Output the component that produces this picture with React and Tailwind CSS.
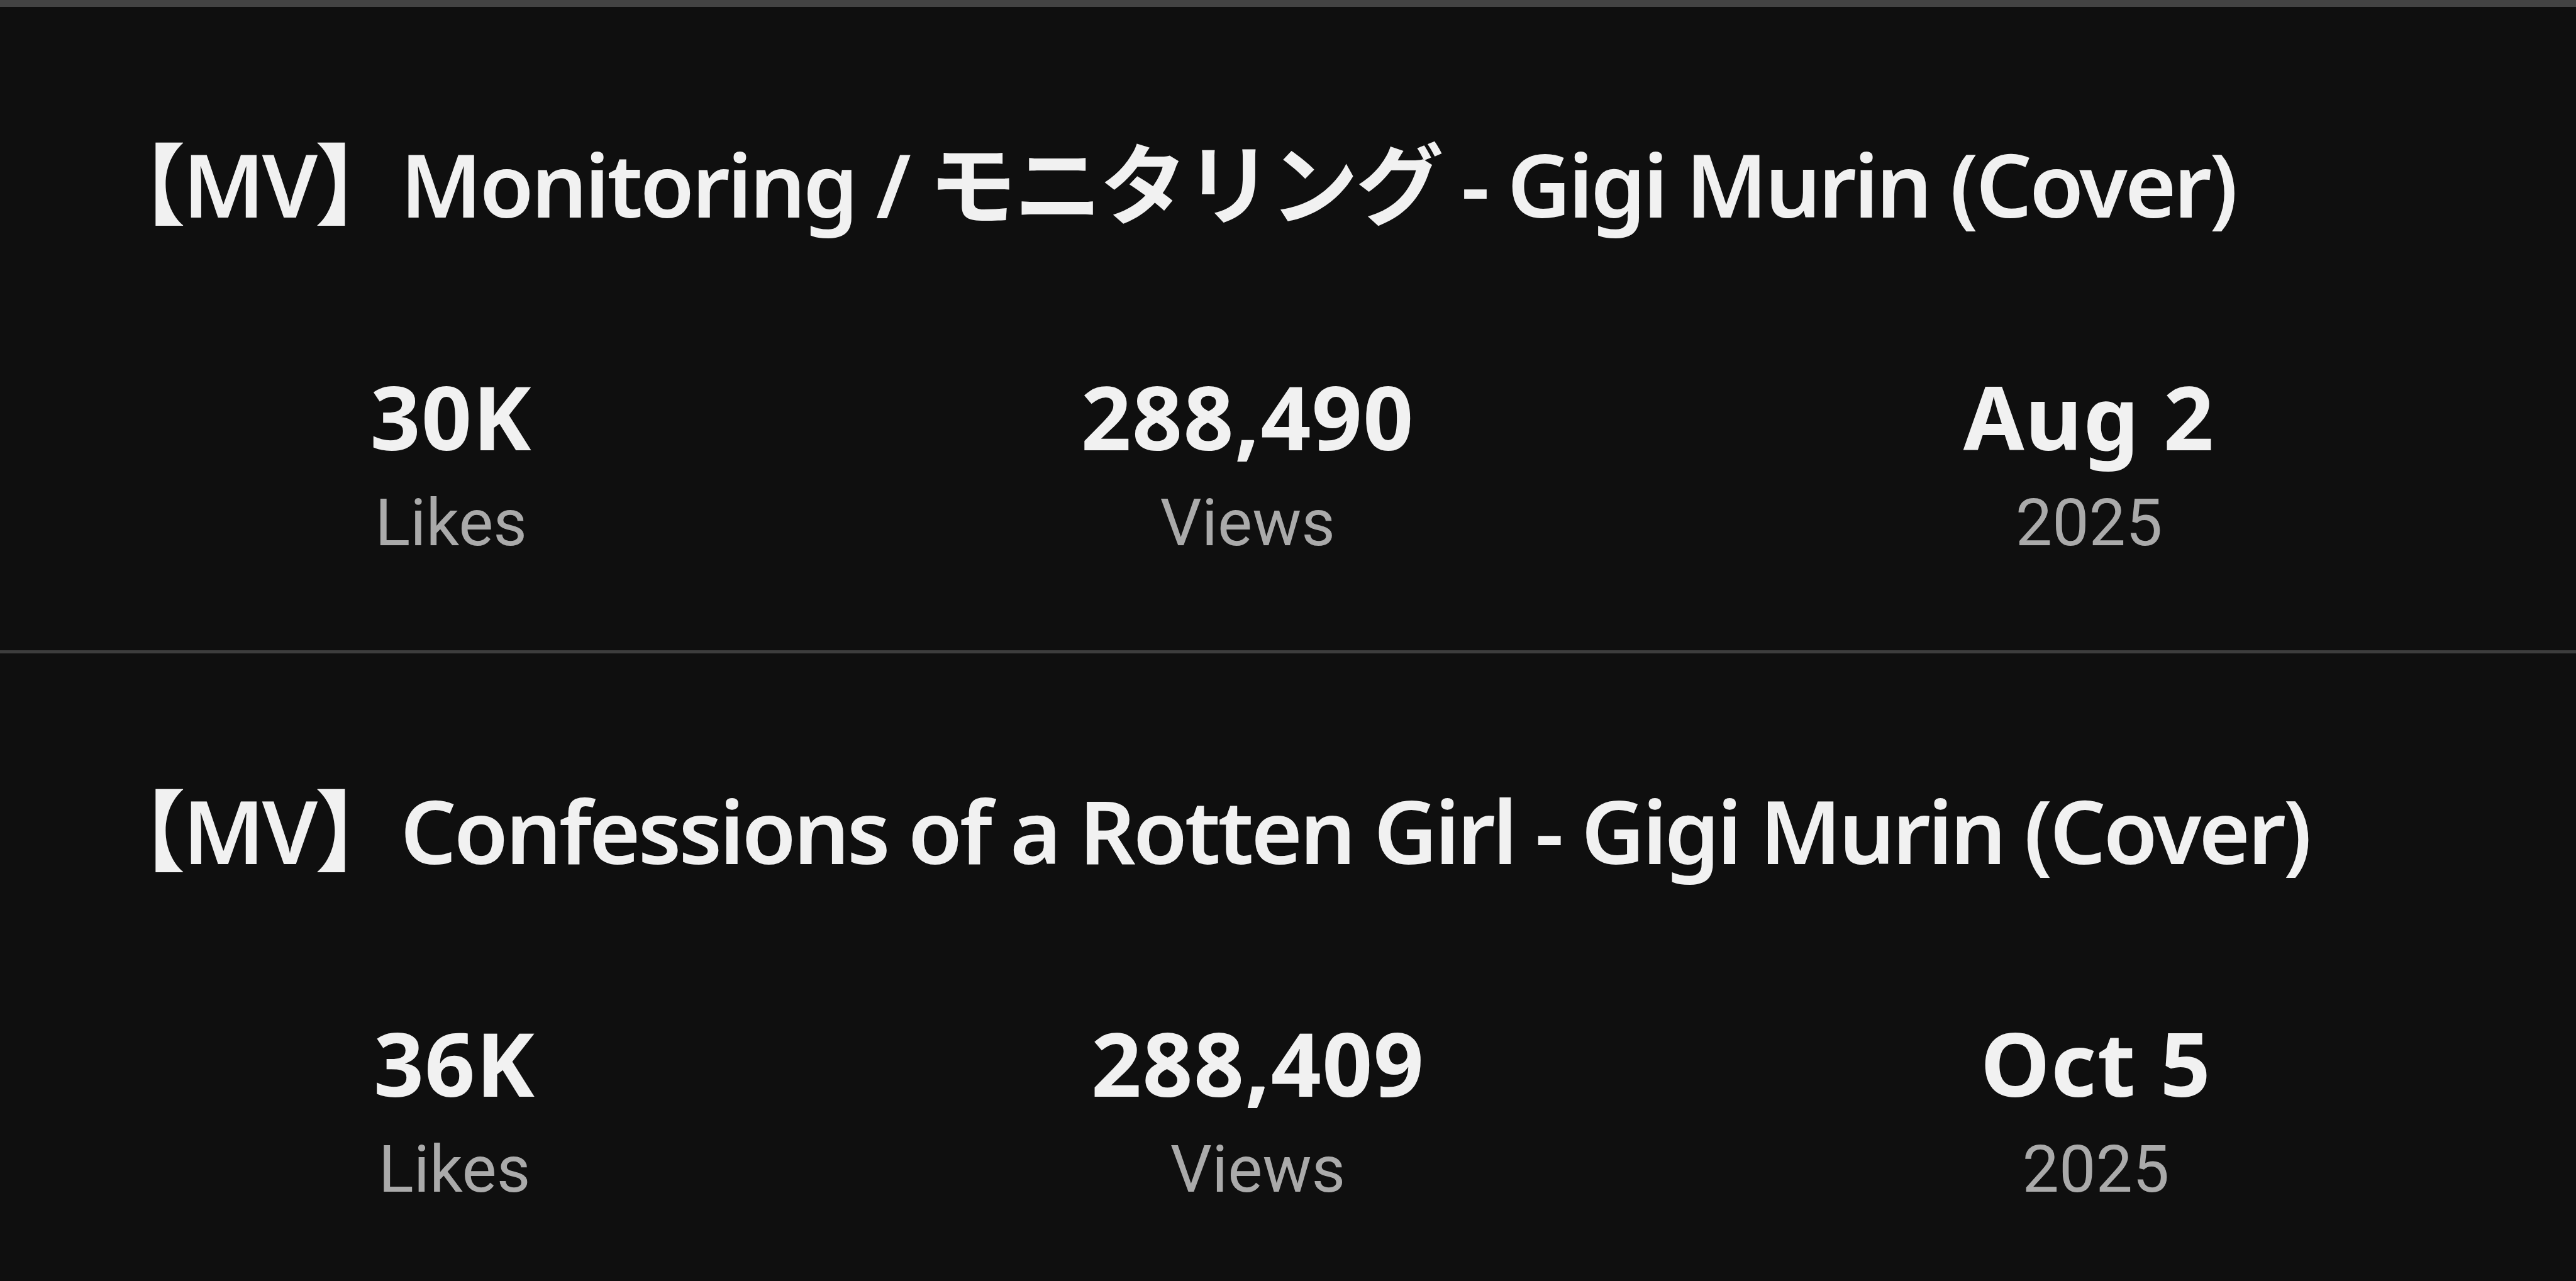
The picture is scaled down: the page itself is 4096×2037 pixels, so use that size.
const videos = [
  {
    title: "【MV】Monitoring / モニタリング - Gigi Murin (Cover)",
    stats: [
      { value: "30K", label: "Likes" },
      { value: "288,490", label: "Views" },
      { value: "Aug 2", label: "2025" },
    ],
  },
  {
    title: "【MV】Confessions of a Rotten Girl - Gigi Murin (Cover)",
    stats: [
      { value: "36K", label: "Likes" },
      { value: "288,409", label: "Views" },
      { value: "Oct 5", label: "2025" },
    ],
  },
];

function VideoStats({ video }) {
  return (
    <div className="h-[1028px] border-b-[5px] border-[#3d3d3d]">
      <h1 className="pt-[211px] pl-[155px] font-['Noto_Sans','Noto_Sans_CJK_JP',sans-serif] text-[140px] font-semibold leading-none tracking-[-0.03em] text-[#f1f1f1] whitespace-nowrap">
        {video.title}
      </h1>
      <div className="mt-[230px] flex justify-around pl-[152px] pr-[138px]">
        {video.stats.map((s) => (
          <div key={s.label} className="flex flex-col items-center">
            <span className="font-['Noto_Sans',sans-serif] text-[140px] font-bold leading-none tracking-[0.01em] text-[#f1f1f1]">
              {s.value}
            </span>
            <span className="mt-[48px] font-['Roboto',sans-serif] text-[104px] leading-none text-[#aaaaaa]">
              {s.label}
            </span>
          </div>
        ))}
      </div>
    </div>
  );
}

export default function App() {
  return (
    <div className="min-h-screen bg-[#0f0f0f]">
      <div className="h-[11px] bg-[#434343]" />
      {videos.map((v) => (
        <VideoStats key={v.title} video={v} />
      ))}
    </div>
  );
}
